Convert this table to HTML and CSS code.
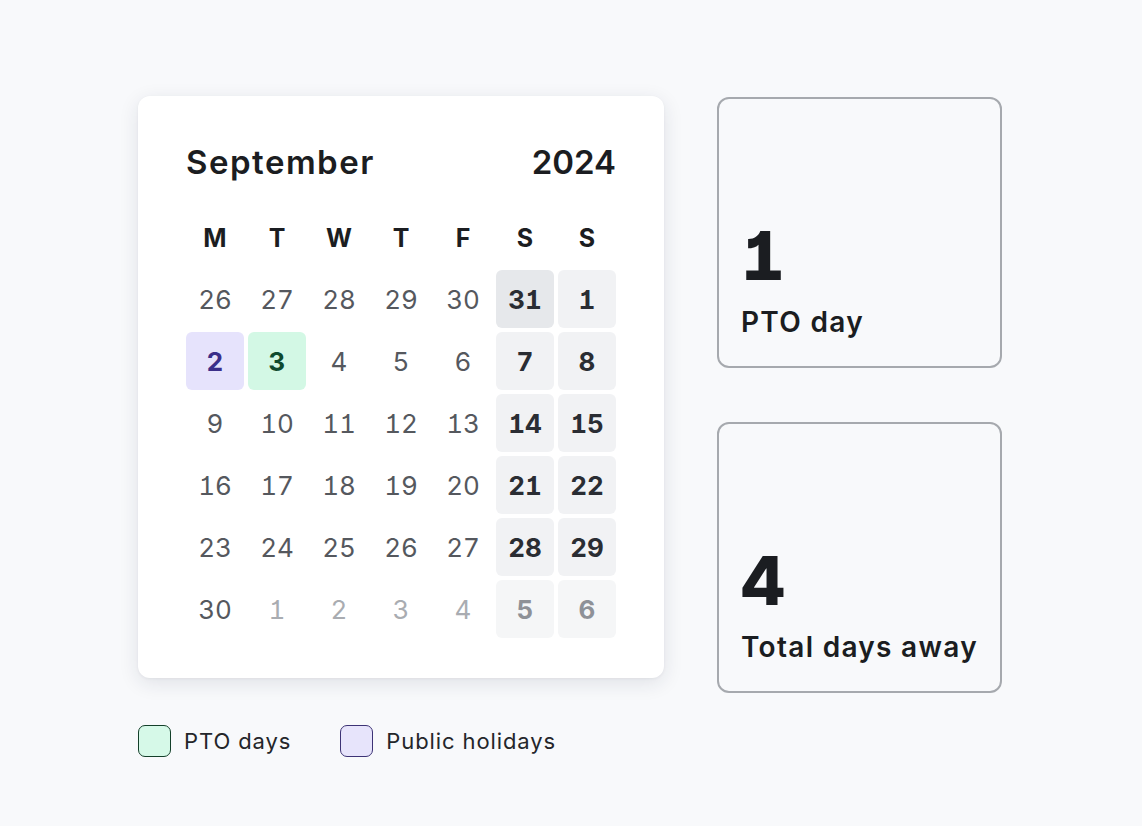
FILE: index.html
```html
<!DOCTYPE html>
<html lang="en">
<head>
<meta charset="utf-8">
<title>PTO calendar</title>
<link rel="stylesheet" href="styles.css">
</head>
<body>
<main class="page">
  <section class="left">
    <div class="calendar">
      <div class="cal-head">
        <span class="month">September</span>
        <span class="year">2024</span>
      </div>
      <div class="grid">
        <div class="wd">M</div><div class="wd">T</div><div class="wd">W</div><div class="wd">T</div><div class="wd">F</div><div class="wd">S</div><div class="wd">S</div>

        <div class="day">26</div><div class="day">27</div><div class="day">28</div><div class="day">29</div><div class="day">30</div><div class="day we active">31</div><div class="day we">1</div>

        <div class="day holiday">2</div><div class="day pto">3</div><div class="day">4</div><div class="day">5</div><div class="day">6</div><div class="day we">7</div><div class="day we">8</div>

        <div class="day">9</div><div class="day">10</div><div class="day">11</div><div class="day">12</div><div class="day">13</div><div class="day we">14</div><div class="day we">15</div>

        <div class="day">16</div><div class="day">17</div><div class="day">18</div><div class="day">19</div><div class="day">20</div><div class="day we">21</div><div class="day we">22</div>

        <div class="day">23</div><div class="day">24</div><div class="day">25</div><div class="day">26</div><div class="day">27</div><div class="day we">28</div><div class="day we">29</div>

        <div class="day">30</div><div class="day muted">1</div><div class="day muted">2</div><div class="day muted">3</div><div class="day muted">4</div><div class="day we muted">5</div><div class="day we muted">6</div>
      </div>
    </div>
    <div class="legend">
      <div class="legend-item"><span class="swatch swatch-pto"></span>PTO days</div>
      <div class="legend-item"><span class="swatch swatch-holiday"></span>Public holidays</div>
    </div>
  </section>
  <section class="stats">
    <div class="stat">
      <div class="stat-num">1</div>
      <div class="stat-label">PTO day</div>
    </div>
    <div class="stat">
      <div class="stat-num">4</div>
      <div class="stat-label">Total days away</div>
    </div>
  </section>
</main>
</body>
</html>
```

FILE: styles.css
```css
html, body {
  margin: 0;
  padding: 0;
}

body {
  background: #f8f9fb;
  font-family: Inter, "Liberation Sans", sans-serif;
  color: #1d1f23;
}

.page {
  display: flex;
  align-items: flex-start;
  gap: 53px;
  padding: 96px 0 0 138px;
}

.left {
  display: flex;
  flex-direction: column;
  gap: 47px;
}

.calendar {
  width: 526px;
  box-sizing: border-box;
  background: #ffffff;
  border-radius: 12px;
  box-shadow: 0 5px 20px rgba(30, 40, 60, 0.11), 0 1px 3px rgba(30, 40, 60, 0.05);
  padding: 44px 48px 40px;
}

.cal-head {
  display: flex;
  justify-content: space-between;
  align-items: baseline;
  font-size: 33px;
  font-weight: 600;
  line-height: 44px;
  color: #1b1d21;
}

.month {
  letter-spacing: 1.5px;
}

.grid {
  margin-top: 26px;
  display: grid;
  grid-template-columns: repeat(7, 58px);
  grid-template-rows: 56px repeat(6, 58px);
  gap: 4px;
}

.wd {
  display: flex;
  align-items: center;
  justify-content: center;
  font-size: 25px;
  font-weight: 700;
  color: #1b1d21;
}

.day {
  display: flex;
  align-items: center;
  justify-content: center;
  border-radius: 6px;
  font-size: 26px;
  font-weight: 400;
  color: #55585e;
  font-variant-numeric: tabular-nums;
  font-feature-settings: "tnum", "cv01";
}

.day.muted {
  color: #a9acb1;
}

.day.we {
  background: #f1f2f4;
  font-weight: 700;
  color: #2a2d33;
}

.day.we.active {
  background: #e6e8eb;
}

.day.we.muted {
  background: #f5f6f7;
  color: #8e9197;
}

.day.holiday {
  background: #e6e3fc;
  color: #3b2f8a;
  font-weight: 700;
}

.day.pto {
  background: #d3f8e5;
  color: #0f4a2e;
  font-weight: 700;
}

.legend {
  display: flex;
  gap: 49px;
  font-size: 22px;
  letter-spacing: 0.9px;
  color: #24262a;
}

.legend-item {
  display: flex;
  align-items: center;
  gap: 13px;
}

.swatch {
  width: 33px;
  height: 32px;
  box-sizing: border-box;
  border-radius: 7px;
  border: 1.5px solid;
}

.swatch-pto {
  background: #d6f9e8;
  border-color: #14402a;
}

.swatch-holiday {
  background: #e7e4fb;
  border-color: #3d3375;
}

.stats {
  display: flex;
  flex-direction: column;
  gap: 54px;
  padding-top: 1px;
}

.stat {
  width: 285px;
  height: 271px;
  box-sizing: border-box;
  border: 2px solid #a6a9ae;
  border-radius: 12px;
  background: #f8f9fb;
  display: flex;
  flex-direction: column;
  justify-content: flex-end;
  padding: 0 22px 27px;
}

.stat-num {
  font-size: 68px;
  font-weight: 800;
  line-height: 68px;
  color: #1b1d21;
  font-feature-settings: "tnum", "cv01";
}

.stat-label {
  margin-top: 16px;
  font-size: 28px;
  font-weight: 600;
  letter-spacing: 1.3px;
  line-height: 34px;
  color: #1b1d21;
}
```
